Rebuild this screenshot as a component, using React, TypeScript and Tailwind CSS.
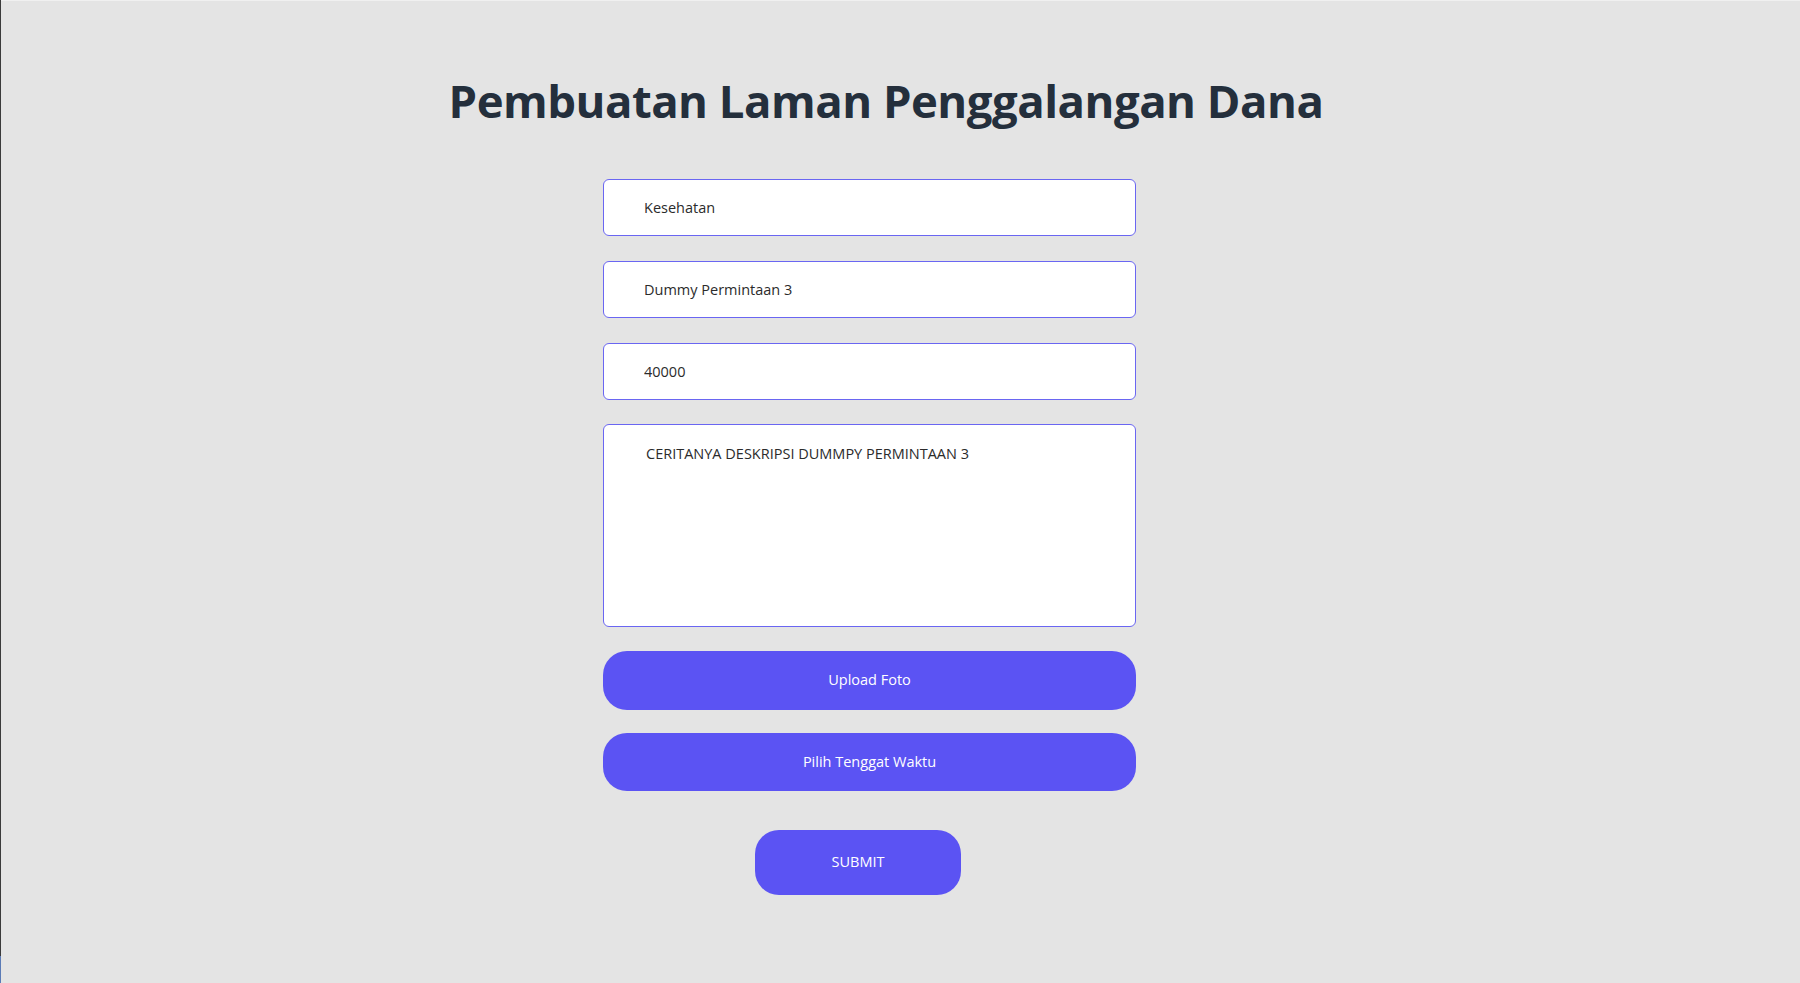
import { useState } from 'react';

export default function App() {
  const [category, setCategory] = useState('Kesehatan');
  const [title, setTitle] = useState('Dummy Permintaan 3');
  const [target, setTarget] = useState('40000');
  const [story, setStory] = useState('CERITANYA DESKRIPSI DUMMPY PERMINTAAN 3');

  return (
    <div className="flex min-h-[983px] bg-[#e4e4e4] font-['Open_Sans',sans-serif]">
      {/* window edge */}
      <div className="flex w-px flex-col">
        <div className="flex-1 bg-[#3b3b3b]" />
        <div className="h-[27px] bg-[#5b7bb6]" />
      </div>

      <div className="flex-1 border-t border-[#f0f0f0]">
        <h1 className="pt-[77px] pr-[29px] text-center text-[45.5px] font-bold leading-none tracking-[-0.5px] text-[#242f3c]">
          Pembuatan Laman Penggalangan Dana
        </h1>

        <form
          className="ml-[602px] mt-[55px] flex w-[533px] flex-col"
          onSubmit={(e) => e.preventDefault()}
        >
          <input
            type="text"
            value={category}
            onChange={(e) => setCategory(e.target.value)}
            className="h-[57px] rounded-md border border-[#6a66f2] bg-white pl-[40px] text-[14.5px] text-[#2b2b2b] outline-none"
          />
          <input
            type="text"
            value={title}
            onChange={(e) => setTitle(e.target.value)}
            className="mt-[25px] h-[57px] rounded-md border border-[#6a66f2] bg-white pl-[40px] text-[14.5px] text-[#2b2b2b] outline-none"
          />
          <input
            type="text"
            value={target}
            onChange={(e) => setTarget(e.target.value)}
            className="mt-[25px] h-[57px] rounded-md border border-[#6a66f2] bg-white pl-[40px] text-[14.5px] text-[#2b2b2b] outline-none"
          />
          <textarea
            value={story}
            onChange={(e) => setStory(e.target.value)}
            className="mt-[24px] h-[203px] resize-none rounded-md border border-[#6a66f2] bg-white pl-[42px] pt-[18px] text-[14.5px] text-[#2b2b2b] outline-none"
          />

          <button
            type="button"
            className="mt-[24px] h-[59px] rounded-[24px] bg-[#5b53f3] text-[14.5px] text-white"
          >
            Upload Foto
          </button>
          <button
            type="button"
            className="mt-[23px] h-[58px] rounded-[24px] bg-[#5b53f3] text-[14.5px] text-white"
          >
            Pilih Tenggat Waktu
          </button>

          <button
            type="submit"
            className="ml-[152px] mt-[39px] h-[65px] w-[206px] rounded-[24px] bg-[#5b53f3] text-[14.5px] text-white"
          >
            SUBMIT
          </button>
        </form>
      </div>
    </div>
  );
}
